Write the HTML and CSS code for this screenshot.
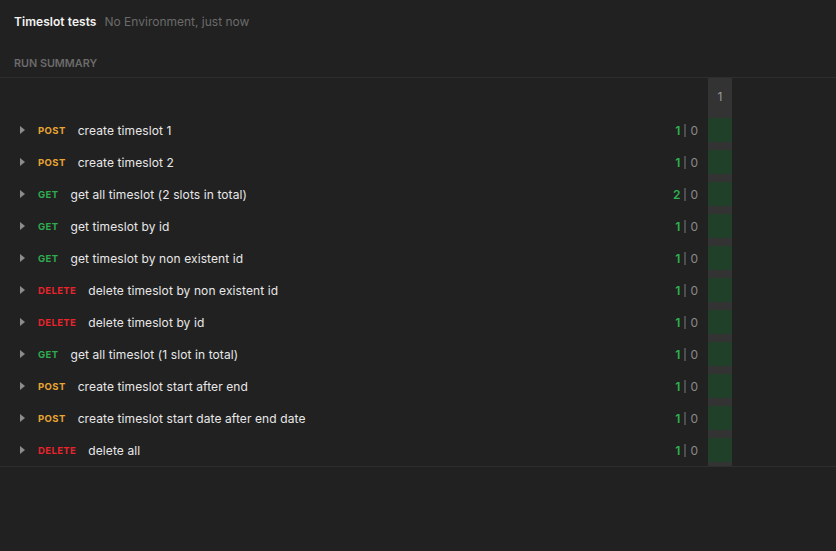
FILE: index.html
```html
<!DOCTYPE html>
<html>
<head>
<meta charset="utf-8">
<link rel="stylesheet" href="styles.css">
</head>
<body>
<div class="header">
  <span class="title">Timeslot tests</span>
  <span class="meta">No Environment, just now</span>
</div>
<div class="label">RUN SUMMARY</div>
<div class="summary">
  <div class="list">
    <div class="list-head"></div>
    <div class="row"><span class="caret"></span><span class="method post">POST</span><span class="name">create timeslot 1</span><span class="counts"><span class="pass">1</span><span class="sep"></span><span class="fail">0</span></span></div>
    <div class="row"><span class="caret"></span><span class="method post">POST</span><span class="name">create timeslot 2</span><span class="counts"><span class="pass">1</span><span class="sep"></span><span class="fail">0</span></span></div>
    <div class="row"><span class="caret"></span><span class="method get">GET</span><span class="name">get all timeslot (2 slots in total)</span><span class="counts"><span class="pass">2</span><span class="sep"></span><span class="fail">0</span></span></div>
    <div class="row"><span class="caret"></span><span class="method get">GET</span><span class="name">get timeslot by id</span><span class="counts"><span class="pass">1</span><span class="sep"></span><span class="fail">0</span></span></div>
    <div class="row"><span class="caret"></span><span class="method get">GET</span><span class="name">get timeslot by non existent id</span><span class="counts"><span class="pass">1</span><span class="sep"></span><span class="fail">0</span></span></div>
    <div class="row"><span class="caret"></span><span class="method delete">DELETE</span><span class="name">delete timeslot by non existent id</span><span class="counts"><span class="pass">1</span><span class="sep"></span><span class="fail">0</span></span></div>
    <div class="row"><span class="caret"></span><span class="method delete">DELETE</span><span class="name">delete timeslot by id</span><span class="counts"><span class="pass">1</span><span class="sep"></span><span class="fail">0</span></span></div>
    <div class="row"><span class="caret"></span><span class="method get">GET</span><span class="name">get all timeslot (1 slot in total)</span><span class="counts"><span class="pass">1</span><span class="sep"></span><span class="fail">0</span></span></div>
    <div class="row"><span class="caret"></span><span class="method post">POST</span><span class="name">create timeslot start after end</span><span class="counts"><span class="pass">1</span><span class="sep"></span><span class="fail">0</span></span></div>
    <div class="row"><span class="caret"></span><span class="method post">POST</span><span class="name">create timeslot start date after end date</span><span class="counts"><span class="pass">1</span><span class="sep"></span><span class="fail">0</span></span></div>
    <div class="row"><span class="caret"></span><span class="method delete">DELETE</span><span class="name">delete all</span><span class="counts"><span class="pass">1</span><span class="sep"></span><span class="fail">0</span></span></div>
  </div>
  <div class="iter">
    <div class="iter-head">1</div>
    <div class="cell"><span class="ok"></span></div>
    <div class="cell"><span class="ok"></span></div>
    <div class="cell"><span class="ok"></span></div>
    <div class="cell"><span class="ok"></span></div>
    <div class="cell"><span class="ok"></span></div>
    <div class="cell"><span class="ok"></span></div>
    <div class="cell"><span class="ok"></span></div>
    <div class="cell"><span class="ok"></span></div>
    <div class="cell"><span class="ok"></span></div>
    <div class="cell"><span class="ok"></span></div>
    <div class="cell"><span class="ok"></span></div>
  </div>
  <div class="rest"></div>
</div>
</body>
</html>
```

FILE: styles.css
```css
* { box-sizing: border-box; }
html, body {
  margin: 0;
  background: #212121;
  font-family: Inter, "Noto Sans", sans-serif;
  color: #e6e6e6;
}
body { width: 836px; height: 551px; overflow: hidden; }

.header {
  height: 42px;
  padding: 0 14px;
  display: flex;
  align-items: center;
  gap: 8px;
}
.title { font-size: 12px; font-weight: 600; color: #f2f2f2; letter-spacing: 0.05px; }
.meta { font-size: 12px; color: #6b6b6b; }

.label {
  padding: 15px 14px 6px;
  line-height: 14px;
  font-size: 10.8px;
  font-weight: 600;
  color: #6b6b6b;
}

.summary {
  display: flex;
  border-top: 1px solid #2e2e2e;
  border-bottom: 1px solid #2e2e2e;
}
.list { width: 708px; }
.list-head { height: 36px; }
.row {
  height: 32px;
  display: flex;
  align-items: center;
  padding-left: 20px;
}
.caret {
  width: 0; height: 0;
  border-top: 4px solid transparent;
  border-bottom: 4px solid transparent;
  border-left: 5px solid #8c8c8c;
  margin-right: 13px;
}
.method {
  font-size: 9.5px;
  font-weight: 700;
  margin-right: 12px;
  letter-spacing: 0.4px;
}
.post { color: #e8a534; }
.get { color: #2faa50; }
.delete { color: #e8242c; }
.name { font-size: 12px; color: #e8e8e8; letter-spacing: 0.1px; }
.counts {
  margin-left: auto;
  margin-right: 10px;
  display: flex;
  align-items: center;
  font-size: 12px;
}
.pass { color: #2eb14f; font-weight: 600; }
.sep { width: 2px; height: 13px; background: #4e4e4e; margin: 0 4px; }
.fail { color: #8a8a8a; }

.iter { width: 24px; background: #333333; }
.iter-head {
  height: 36px;
  display: flex;
  align-items: center;
  justify-content: center;
  font-size: 12px;
  color: #9a9a9a;
}
.cell { height: 32px; padding: 4px 0; }
.ok { display: block; height: 24px; background: #21402a; }
.rest { flex: 1; }
```
